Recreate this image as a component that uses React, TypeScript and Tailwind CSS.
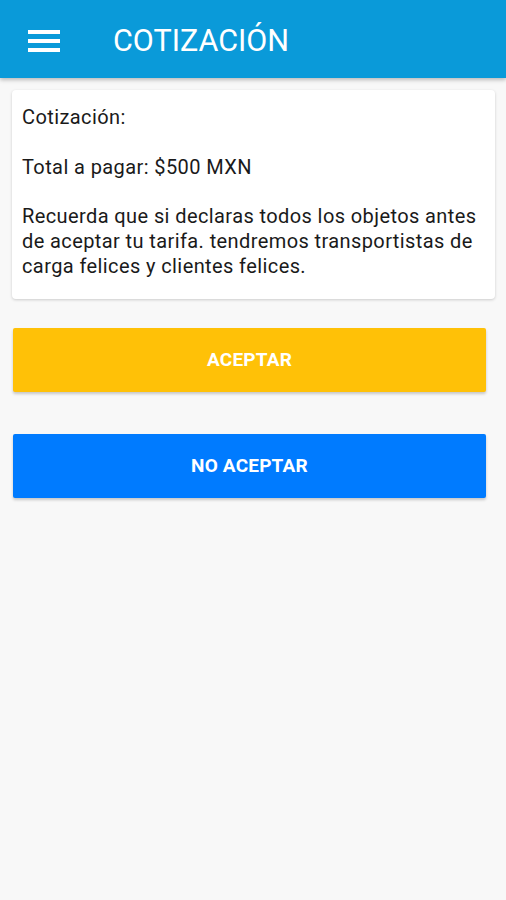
export default function App() {
  return (
    <div className="min-h-[900px] w-full bg-[#f8f8f8] font-['Roboto',sans-serif]">
      <header className="h-[78px] pt-[4px] bg-[#0a9ad9] flex items-center shadow-[0_2px_4px_rgba(0,0,0,0.25)]">
        <div className="ml-[28px] w-[32px] flex flex-col gap-[5px]">
          <span className="block h-[4px] bg-white" />
          <span className="block h-[4px] bg-white" />
          <span className="block h-[4px] bg-white" />
        </div>
        <h1 className="ml-[53px] text-white text-[30.5px] leading-none">COTIZACIÓN</h1>
      </header>

      <div className="pt-[12px] pl-[12px] pr-[11px]">
        <div className="bg-white rounded-[4px] shadow-[0_1px_3px_rgba(0,0,0,0.18)] px-[10px] pt-[15px] pb-[20px] text-[20px] leading-[25px] tracking-[0.4px] text-[#1a1a1a]">
          <p>Cotización:</p>
          <p className="mt-[25px]">Total a pagar: $500 MXN</p>
          <p className="mt-[24px]">
            Recuerda que si declaras todos los objetos antes de aceptar tu tarifa. tendremos transportistas de carga felices y clientes felices.
          </p>
        </div>
      </div>

      <div className="pl-[13px] pr-[20px] mt-[29px] flex flex-col gap-[42px]">
        <button className="h-[64px] w-full rounded-[2px] bg-[#ffc107] text-white font-bold text-[19px] tracking-[0.2px] shadow-[0_2px_3px_rgba(0,0,0,0.2)]">
          ACEPTAR
        </button>
        <button className="h-[64px] w-full rounded-[2px] bg-[#007bff] text-white font-bold text-[19px] tracking-[0.2px] shadow-[0_2px_3px_rgba(0,0,0,0.2)]">
          NO ACEPTAR
        </button>
      </div>
    </div>
  );
}
